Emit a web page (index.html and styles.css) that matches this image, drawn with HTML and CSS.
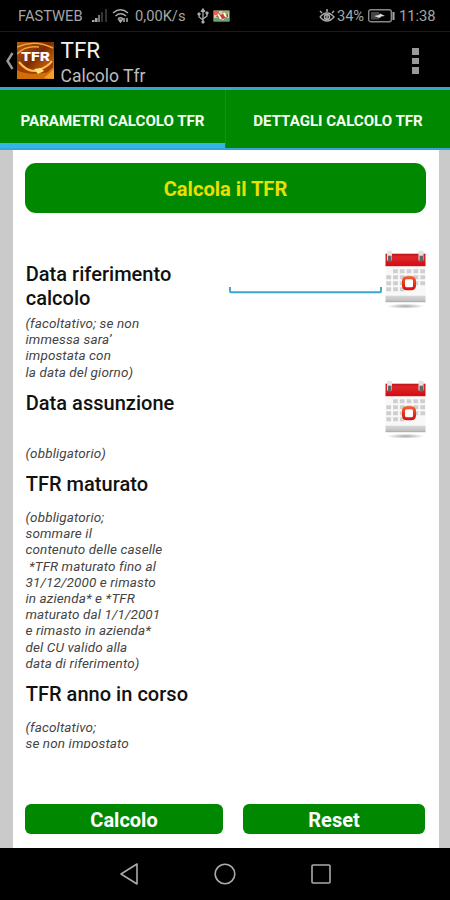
FILE: index.html
```html
<!DOCTYPE html>
<html lang="it">
<head>
<meta charset="utf-8">
<title>TFR - Calcolo Tfr</title>
<link rel="stylesheet" href="styles.css">
</head>
<body>
<svg class="defs" width="0" height="0">
  <defs>
    <linearGradient id="red" x1="0" y1="0" x2="0" y2="1"><stop offset="0" stop-color="#b91418"/><stop offset=".25" stop-color="#e0262a"/><stop offset="1" stop-color="#cf0c12"/></linearGradient>
    <linearGradient id="ring" x1="0" y1="0" x2="0" y2="1"><stop offset="0" stop-color="#f4582c"/><stop offset="1" stop-color="#d8140e"/></linearGradient>
    <linearGradient id="base" x1="0" y1="0" x2="0" y2="1"><stop offset="0" stop-color="#d8d8d8"/><stop offset=".7" stop-color="#c4c4c4"/><stop offset="1" stop-color="#a8a8a8"/></linearGradient>
    <radialGradient id="shade"><stop offset="0" stop-color="#a8a8a8"/><stop offset="1" stop-color="#fff"/></radialGradient>
    <symbol id="calendar" viewBox="-.5 -.7 42 60">
      <rect x="1" y="15" width="40" height="33" fill="#f8f8f8"/>
      <rect x="1" y="4" width="40" height="12.500" fill="url(#red)"/>
      <g fill="#e4e4e4"><rect x="2.500" y="1" width="5" height="10" rx="1"/><rect x="34" y="1" width="5" height="10" rx="1"/></g>
      <g fill="#666"><rect x="3.500" y="6" width="3.500" height="6"/><rect x="35" y="6" width="3.500" height="6"/></g>
      <g stroke="#cfcfd1" stroke-width="4" stroke-dasharray="4.800 2"><path d="M8.500 21.500H41M1.800 27.500H41M1.800 33.500H41M1.800 39.500H20"/></g>
      <rect x="19" y="28" width="11" height="11" rx="3" fill="#fff" stroke="url(#ring)" stroke-width="3"/>
      <rect x="1" y="46" width="40" height="6.500" fill="url(#base)"/>
      <ellipse cx="21" cy="56.500" rx="19" ry="2.500" fill="url(#shade)"/>
    </symbol>
    <linearGradient id="gold" x1="0" y1="0" x2="1" y2="1"><stop offset="0" stop-color="#b85a08"/><stop offset=".45" stop-color="#7c2a04"/><stop offset=".75" stop-color="#c46208"/><stop offset="1" stop-color="#efa023"/></linearGradient>
  </defs>
</svg>
<div class="screen">
  <div class="status">
    <span class="carrier">FASTWEB</span>
    <svg class="signal" width="16" height="14" viewBox="0 0 16 14"><path d="M0 13v-2h2.500v2zM3 13V9h2.500v4z" fill="#aaa"/><path d="M6 13V6h2v7z" fill="#777"/><path d="M9 13V3h2v10zM13 13V0h2v13z" fill="#333"/></svg>
    <svg class="wifi" width="18" height="16" viewBox="0 0 18 16" fill="none" stroke="#aaa" stroke-width="1.500"><path d="M1 5Q8.500-1.500 16 5M3.500 8Q8.500 3.500 14 8M6 11Q8.500 8.500 11 11"/><path d="M7 12h3l-1.500 2zM12 10v4M15 10v4" fill="#aaa"/></svg>
    <span class="speed">0,00K/s</span>
    <svg class="usb" width="12" height="16" viewBox="0 0 12 16" fill="none" stroke="#aaa"><path d="M6 14V2M6 12L2 9V6M6 11l4-3V5" stroke-width="1.300"/><path d="M4 3.500L6 .5l2 3zM1 5h2v2H1zM9 4h2v2H9zM5 13h2v2H5z" fill="#aaa"/></svg>
    <svg class="gallery" width="17" height="12" viewBox="0 0 17 12"><rect x=".5" y=".5" width="16" height="11" fill="#d5cdb2"/><path d="M1 1h5v4H1z" fill="#e66545"/><path d="M3 7l3-4 2 2 4-3 3 2v3l-5 2z" fill="#c93b35"/><path d="M9 1h7v2l-5 3z" fill="#94b65a"/><path d="M1 8h6l4 3H1zM12 8h4v3h-6z" fill="#67a36c"/><path d="M5 4l3 5M11 3l2 4" stroke="#fff" stroke-width="1.800"/></svg>
    <svg class="eye" width="16" height="15" viewBox="0 0 16 15" fill="none" stroke="#aaa" stroke-width="1.500"><path d="M1 8q7-8 14 0q-7 8-14 0M3 4L1 2M13 4l2-2M8 3V0"/><circle cx="8" cy="8" r="2.500"/><path d="M8 6v4"/></svg>
    <span class="percent">34%</span>
    <svg class="battery" width="27" height="14" viewBox="0 0 27 14"><rect x=".7" y=".7" width="22.600" height="12" rx="2" fill="none" stroke="#888" stroke-width="1.400"/><rect x="3" y="3" width="8" height="7.500" fill="#444"/><path d="M6 7l5-1 1-1.500L17 7l-4 .5-1 1.500z" fill="#ddd"/><rect x="24.500" y="3" width="2" height="8" fill="#aaa"/></svg>
    <span class="clock">11:38</span>
  </div>
  <header class="bar">
    <svg class="back" width="9" height="18" viewBox="0 0 9 18"><path d="M7.500 1L2.500 9l5 8" fill="none" stroke="#999" stroke-width="2.400"/></svg>
    <svg class="logo" width="37" height="37" viewBox="0 0 37 37"><rect width="37" height="37" fill="url(#gold)"/><path d="M0 5Q18-3 36 6M0 12Q8 3 22 5" stroke="#eea23d" stroke-width="1.500" fill="none"/><path d="M2 19q8 11 19 9t15-10v7L24 37H0V24z" fill="#a53a03"/><path d="M2 20q10 12 20 8t13-9" stroke="#ffc351" stroke-width="2" fill="none"/><path d="M0 28q12 7 37 1v8H0z" fill="#cf6f08"/><path d="M17 27l7-1 3 3-6 3z" fill="#ffe483"/><path d="M27 36l10-9v10z" fill="#f0a32a"/><text x="18.500" y="19" text-anchor="middle" textLength="29" lengthAdjust="spacingAndGlyphs" class="logo-text">TFR</text></svg>
    <div class="titles"><div class="title">TFR</div><div class="subtitle">Calcolo Tfr</div></div>
    <div class="menu"><i></i><i></i><i></i></div>
  </header>
  <nav class="tabs">
    <div class="tab active">PARAMETRI CALCOLO TFR</div>
    <div class="tab">DETTAGLI CALCOLO TFR</div>
  </nav>
  <main class="page">
    <div class="banner">Calcola il TFR</div>
    <div class="form">
      <section class="row row-ref">
        <div class="label">Data riferimento<br>calcolo</div>
        <svg class="field" width="153" height="8" viewBox="0 0 153 8"><path d="M1 1v4.200q0 1 1 1h149q1 0 1-1V1" fill="none" stroke="#3ba5cf" stroke-width="1.900"/></svg>
        <svg class="cal" width="42" height="60"><use href="#calendar"/></svg>
      </section>
      <p class="hint hint-ref">(facoltativo; se non<br>immessa sara’<br>impostata con<br>la data del giorno)</p>
      <section class="row row-hire">
        <div class="label">Data assunzione</div>
        <svg class="cal" width="42" height="60"><use href="#calendar"/></svg>
      </section>
      <p class="hint hint-hire">(obbligatorio)</p>
      <div class="label label-acc">TFR maturato</div>
      <p class="hint hint-acc">(obbligatorio;<br>sommare il<br>contenuto delle caselle<br>&nbsp;*TFR maturato fino al<br>31/12/2000 e rimasto<br>in azienda* e *TFR<br>maturato dal 1/1/2001<br>e rimasto in azienda*<br>del CU valido alla<br>data di riferimento)</p>
      <div class="label label-year">TFR anno in corso</div>
      <p class="hint hint-year">(facoltativo;<br>se non impostato</p>
    </div>
    <div class="actions"><div class="button">Calcolo</div><div class="button">Reset</div></div>
  </main>
  <footer class="system">
    <svg width="20" height="24" viewBox="0 0 20 24"><path d="M18 2v20L2 12z" fill="none" stroke="#aaa" stroke-width="1.600" stroke-linejoin="round"/></svg>
    <svg width="22" height="22" viewBox="0 0 22 22"><circle cx="11" cy="11" r="9.800" fill="none" stroke="#aaa" stroke-width="1.600"/></svg>
    <svg width="20" height="20" viewBox="0 0 20 20"><rect x="1" y="1" width="18" height="18" rx="1" fill="none" stroke="#aaa" stroke-width="1.600"/></svg>
  </footer>
</div>
</body>
</html>
```

FILE: styles.css
```css
* { box-sizing: border-box; }
body { margin: 0; background: #000; font-family: Roboto, "Liberation Sans", sans-serif; }
svg { display: block; flex: none; }
.defs { height: 0; }
.screen { width: 450px; height: 900px; display: flex; flex-direction: column; overflow: hidden; background: #000; }
.status { height: 32px; flex: none; display: flex; align-items: center; padding: 1px 14px 0 18px; border-bottom: 1px solid #1c1c1c; color: #a5a5a5; font-size: 14.7px; white-space: nowrap; }
.carrier { width: 66px; }
.signal { margin-left: 8px; }
.wifi { margin-left: 4px; }
.speed { margin-left: 5px; width: 53px; }
.usb { margin-left: 9px; }
.gallery { margin-left: 4px; }
.eye { margin-left: auto; }
.percent { margin-left: 2px; width: 28px; letter-spacing: -.1px; }
.battery { margin-left: 3px; }
.clock { margin-left: 4px; width: 37px; }
.bar { height: 55px; flex: none; display: flex; align-items: flex-start; padding: 0 31px 0 5px; color: #f2f2f2; }
.back { margin-top: 20px; }
.logo { margin: 10px 0 0 3px; }
.logo-text { font: 900 12.5px Roboto, sans-serif; fill: #fff; }
.titles { margin: 4px 0 0 6.5px; white-space: nowrap; }
.title { font-size: 22.5px; line-height: 28px; }
.subtitle { font-size: 17.5px; line-height: 25px; color: #bdbdbd; }
.menu { margin: 16px 0 0 auto; display: flex; flex-direction: column; gap: 3px; }
.menu i { width: 7px; height: 6.5px; background: #999; }
.tabs { height: 63px; flex: none; display: flex; background: #008800; border-top: 3px solid #35a6d3; border-bottom: 2px solid #35a6d3; }
.tab { width: 225px; display: flex; align-items: center; justify-content: center; color: #f4fff4; font-size: 15.1px; font-weight: 700; letter-spacing: -.02px; white-space: nowrap; padding-top: 4px; }
.tab + .tab { border-left: 1px solid #15901a; }
.active { border-bottom: 5px solid #33b5e5; padding-top: 9px; }
.page { height: 698px; flex: none; padding: 13px 13px 0 12px; border: solid #cacaca; border-width: 0 11px 0 13px; background: #fff; display: flex; flex-direction: column; }
.banner { height: 50px; flex: none; border-radius: 11px; background: #008800; color: #eadf00; font-size: 20.1px; font-weight: 700; line-height: 52px; text-align: center; }
.form { height: 535px; flex: none; overflow: hidden; color: #111; padding-top: 36px; }
.row { display: flex; align-items: flex-start; }
.label { font-size: 20px; font-weight: 500; line-height: 24px; letter-spacing: .03px; white-space: nowrap; padding-left: .7px; }
.row-ref { height: 66px; }
.row-ref .label { width: 204px; padding-top: 13px; }
.field { margin-top: 37px; }
.cal { margin-left: auto; }
.row-ref .cal { margin-left: 2px; }
.hint { margin: 0; font-size: 13.5px; font-weight: 400; font-style: italic; line-height: 16.2px; letter-spacing: .12px; color: #444; white-space: nowrap; padding-left: .5px; }
.hint-ref { height: 64px; }
.row-hire { height: 66px; }
.row-hire .label { padding-top: 12px; }
.hint-hire { height: 27px; }
.label-acc { height: 36px; }
.hint-acc { height: 174px; padding-top: 1px; }
.label-year { height: 35px; }
.hint-year { padding-top: 1.5px; }
.actions { margin-top: 56px; display: grid; grid-template-columns: 198px 182px; gap: 20px; }
.button { height: 30px; border-radius: 6px; background: #008800; color: #fff; font-size: 20px; font-weight: 700; line-height: 32px; text-align: center; }
.system { height: 52px; display: grid; grid-template-columns: repeat(3, 96px); justify-content: center; align-items: center; justify-items: center; background: #000; }
```
